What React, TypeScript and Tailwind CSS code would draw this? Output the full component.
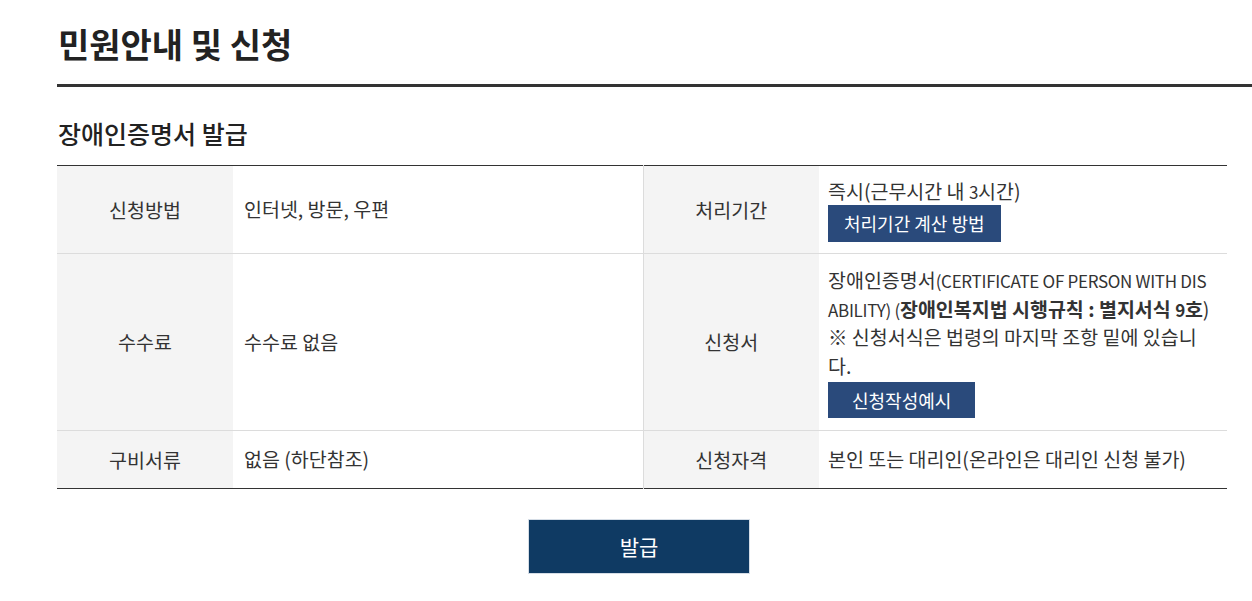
import React from 'react';

const font = { fontFamily: '"Noto Sans CJK KR", "Noto Sans", sans-serif' };

function Th({ children }: { children: React.ReactNode }) {
    return (
        <th className="w-[176px] bg-[#f4f4f4] px-2 py-[14px] text-center align-middle text-[19.5px] leading-[28px] font-normal text-[#333]">
            {children}
        </th>
    );
}

function Td({ children, last }: { children: React.ReactNode; last?: boolean }) {
    return (
        <td className={`py-[10px] align-middle text-[19.5px] leading-[28.5px] text-[#333] break-all ${last ? 'pl-[9px] pr-[12px]' : 'px-[11px] border-r border-[#dcdcdc]'}`}>
            {children}
        </td>
    );
}

// latin / digits in the reference font are narrower than the hangul
function L({ children }: { children: React.ReactNode }) {
    return <span className="text-[17px] leading-none tracking-[-0.3px]">{children}</span>;
}

export default function App() {
    return (
        <div className="min-h-[601px] bg-white pl-[57px]" style={font}>
            {/* Page title */}
            <div className="border-b-[3px] border-[#333] pt-[22px] pb-[18px]">
                <h1 className="text-[34px] leading-[44px] font-bold text-[#222] pl-px">민원안내 및 신청</h1>
            </div>

            <div className="pr-[25px]">
                <h2 className="mt-[29px] mb-[15px] pl-px text-[25px] leading-[34px] font-medium text-[#222]">장애인증명서 발급</h2>

                <table className="w-full table-fixed border-collapse border-t border-b border-t-[#333] border-b-[#333]">
                    <colgroup>
                        <col className="w-[176px]" />
                        <col className="w-[410px]" />
                        <col className="w-[176px]" />
                        <col />
                    </colgroup>
                    <tbody>
                        <tr className="h-[88px] border-b border-[#dcdcdc]">
                            <Th>신청방법</Th>
                            <Td>인터넷, 방문, 우편</Td>
                            <Th>처리기간</Th>
                            <Td last>
                                <div>즉시(근무시간 내 <L>3</L>시간)</div>
                                <button className="block h-[37px] bg-[#2a4a7b] px-[16px] text-[18px] leading-[37px] text-white">처리기간 계산 방법</button>
                            </Td>
                        </tr>
                        <tr className="h-[177px] border-b border-[#dcdcdc]">
                            <Th>수수료</Th>
                            <Td>수수료 없음</Td>
                            <Th>신청서</Th>
                            <Td last>
                                <div className="pr-[2px]">
                                    장애인증명서<L>(CERTIFICATE OF PERSON WITH DISABILITY) (</L><b className="font-bold">장애인복지법 시행규칙 : 별지서식 <L>9</L>호</b>)
                                </div>
                                <div className="pr-[2px]">※ 신청서식은 법령의 마지막 조항 밑에 있습니다.</div>
                                <button className="mt-[2px] block h-[36px] bg-[#2a4a7b] px-[24px] text-[18px] leading-[36px] text-white">신청작성예시</button>
                            </Td>
                        </tr>
                        <tr className="h-[58px]">
                            <Th>구비서류</Th>
                            <Td>없음 (하단참조)</Td>
                            <Th>신청자격</Th>
                            <Td last>본인 또는 대리인(온라인은 대리인 신청 불가)</Td>
                        </tr>
                    </tbody>
                </table>

                <div className="flex justify-center pt-[30px]">
                    <button className="mr-[6px] h-[55px] w-[222px] border border-[#d5dde6] bg-[#0f3a63] text-[21px] text-white">발급</button>
                </div>
            </div>
        </div>
    );
}
